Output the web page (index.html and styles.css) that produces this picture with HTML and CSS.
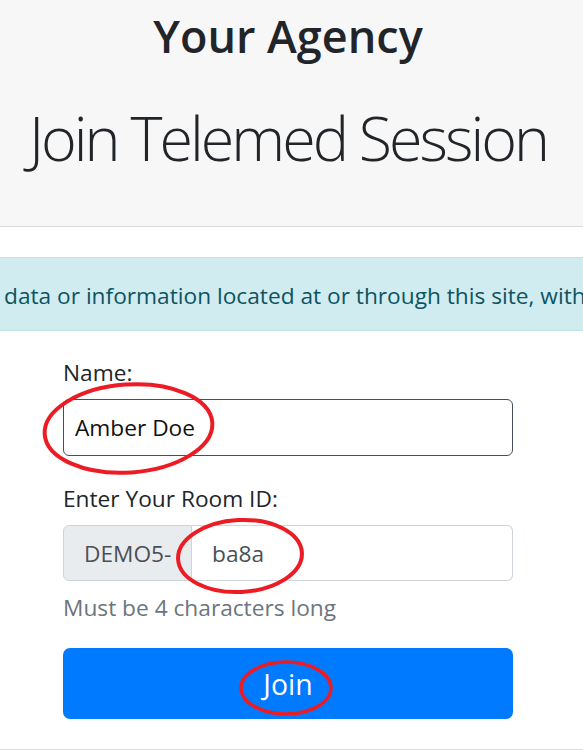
FILE: index.html
```html
<!DOCTYPE html>
<html lang="en">
<head>
    <meta charset="UTF-8">
    <meta name="viewport" content="width=device-width, initial-scale=1.0">
    <title>Join Telemed Session</title>
    <link rel="stylesheet" href="styles.css">
</head>
<body>

    <header class="masthead">
        <h1 class="agency">Your Agency</h1>
        <h2 class="title">Join Telemed Session</h2>
    </header>

    <main class="content">
        <div class="notice">data or information located at or through this site, without the prior written consent of the agency.</div>

        <form class="join-form" onsubmit="return false">
            <div class="field">
                <label for="name">Name:</label>
                <input id="name" class="text-input name-input" type="text" value="Amber Doe">
            </div>

            <div class="field">
                <label for="room">Enter Your Room ID:</label>
                <div class="input-group">
                    <span class="prefix">DEMO5-</span>
                    <input id="room" class="text-input room-input" type="text" value="ba8a">
                </div>
                <small class="hint">Must be 4 characters long</small>
            </div>

            <button class="join-btn" type="submit">Join</button>
        </form>
    </main>

    <footer class="footer"></footer>

    <!-- red markup drawn over the screenshot -->
    <svg class="marks" width="583" height="752" viewBox="0 0 583 752">
        <ellipse cx="128.5" cy="428.5" rx="84" ry="44" transform="rotate(-4 128.5 428.5)"></ellipse>
        <ellipse cx="240" cy="556" rx="62" ry="36" transform="rotate(-3 240 556)"></ellipse>
        <ellipse class="thin" cx="286" cy="688" rx="45" ry="26"></ellipse>
    </svg>

</body>
</html>
```

FILE: styles.css
```css
body {
    margin: 0;
    font-family: "Open Sans", "Liberation Sans", sans-serif;
    font-size: 22.7px;
    color: #212529;
    background: #fff;
    position: relative;
    overflow: hidden;
    height: 752px;
}
.masthead {
    background-color: #f7f7f7;
    border-bottom: 1px solid #dadada;
    padding: 9px 7px 51px 0;
    text-align: center;
}
.agency {
    margin: 0;
    font-size: 45px;
    font-weight: 600;
    line-height: 54px;
    color: #212529;
}
.title {
    margin: 38px 0 0;
    font-size: 61px;
    font-weight: 300;
    line-height: 74px;
    letter-spacing: -3px;
    color: #212529;
}
.content {
    padding-top: 30px;
}
.notice {
    background-color: #d1ecf1;
    border-top: 1px solid #bee5eb;
    border-bottom: 1px solid #bee5eb;
    color: #0c5460;
    padding: 20px 0 16px 4px;
    line-height: 36px;
    white-space: nowrap;
    overflow: hidden;
}
.join-form {
    width: 450px;
    margin: 0 auto;
    padding: 25px 7px 0 0;
}
.field {
    margin-bottom: 26px;
}
.field:last-of-type {
    margin-bottom: 0;
}
label {
    display: block;
    line-height: 34px;
    margin-bottom: 9px;
}
.text-input {
    display: block;
    width: 100%;
    box-sizing: border-box;
    height: 57px;
    font-family: inherit;
    font-size: 22.7px;
    color: #495057;
    background: #fff;
    border: 1px solid #ced4da;
    border-radius: 6px;
    outline: none;
}
.name-input {
    padding: 0 11px;
    color: #111;
    border-color: #474e5d;
}
.input-group {
    display: flex;
    height: 56px;
}
.prefix {
    flex: 0 0 129px;
    box-sizing: border-box;
    padding-left: 20px;
    display: flex;
    align-items: center;
    background-color: #e9ecef;
    border: 1px solid #ced4da;
    border-radius: 6px 0 0 6px;
    color: #495057;
}
.room-input {
    flex: 1;
    height: 56px;
    padding: 0 20px;
    border-left: none;
    border-radius: 0 6px 6px 0;
}
.hint {
    display: block;
    margin-top: 10px;
    font-size: 22.7px;
    line-height: 34px;
    color: #6c757d;
}
.join-btn {
    display: block;
    width: 100%;
    height: 71px;
    margin-top: 23px;
    font-family: inherit;
    font-size: 28.4px;
    color: #fff;
    background-color: #007bff;
    border: none;
    border-radius: 7px;
    cursor: pointer;
}
.footer {
    margin-top: 30px;
    border-top: 1px solid #dedede;
}
.marks {
    position: absolute;
    top: 0;
    left: 0;
    pointer-events: none;
}
.marks ellipse {
    fill: none;
    stroke: #ec1c24;
    stroke-width: 4;
}
.marks .thin {
    stroke-width: 3.5;
}
```
